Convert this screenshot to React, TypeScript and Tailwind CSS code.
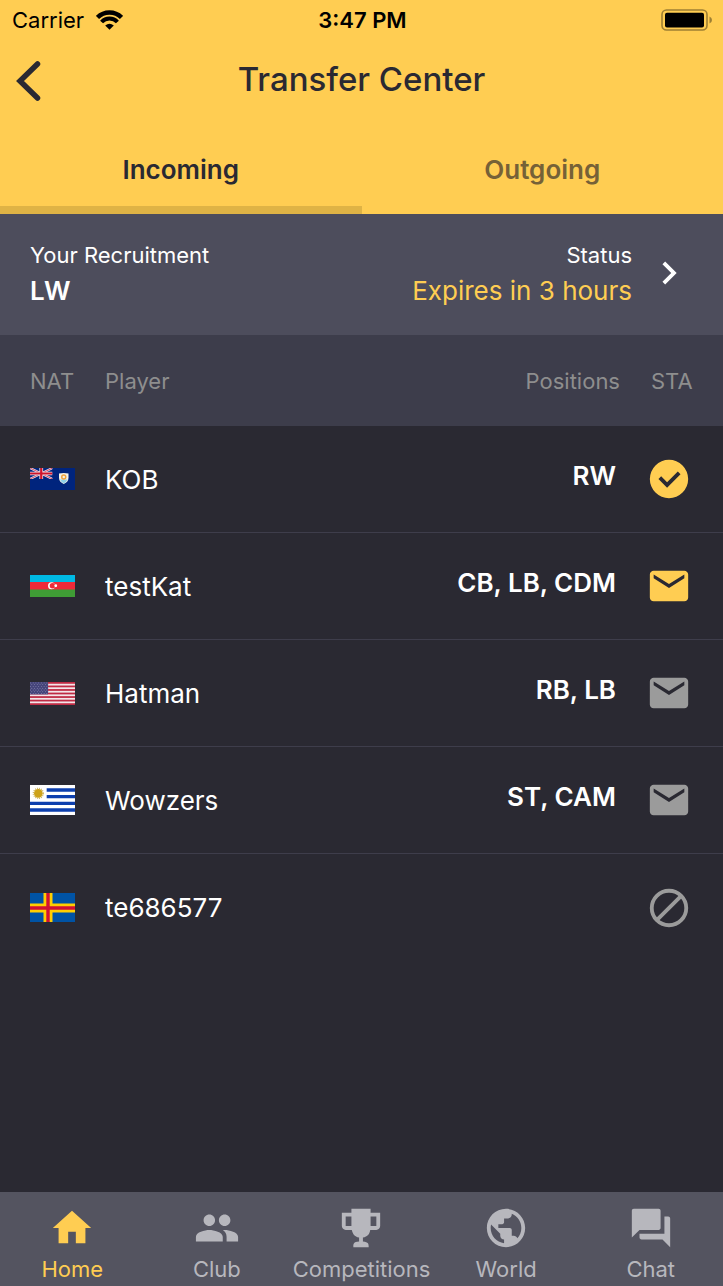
import type { ReactNode } from "react";
import { MdChevronRight, MdEmail, MdHome, MdPeople, MdPublic, MdQuestionAnswer } from "react-icons/md";

type Status = "accepted" | "offer" | "message" | "blocked";

function AnguillaFlag() {
  return (
    <svg viewBox="0 0 90 44" className="block h-[22px] w-[45px]" role="img" aria-label="Anguilla">
      <rect width="90" height="44" fill="#00247d" />
      <svg width="45" height="22" viewBox="0 0 60 30" preserveAspectRatio="none">
        <path d="M0 0L60 30M60 0L0 30" stroke="#e9e4ee" strokeWidth="6" />
        <path d="M0 0L60 30M60 0L0 30" stroke="#d43a55" strokeWidth="2.4" />
        <path d="M30 0V30M0 15H60" stroke="#e9e4ee" strokeWidth="10" />
        <path d="M30 0V30M0 15H60" stroke="#cf142b" strokeWidth="6" />
      </svg>
      <path d="M58 11q9.500-2 19 0v8q0 9-9.500 13q-9.500-4-9.500-13z" fill="#f6f3e6" />
      <path d="M60 23h15q-2 5-7.500 8q-5.500-3-7.500-8z" fill="#8ed0e6" />
      <circle cx="67.500" cy="18" r="4" fill="none" stroke="#f0a33c" strokeWidth="3" />
    </svg>
  );
}

function AzerbaijanFlag() {
  return (
    <svg viewBox="0 0 90 44" className="block h-[22px] w-[45px]" role="img" aria-label="Azerbaijan">
      <rect width="90" height="44" fill="#3f9c35" />
      <rect width="90" height="29" fill="#ed2939" />
      <rect width="90" height="14" fill="#00b9e4" />
      <circle cx="43" cy="21.500" r="7" fill="#fff" />
      <circle cx="45" cy="21.500" r="5.600" fill="#ed2939" />
      <circle cx="51.500" cy="21.500" r="2.800" fill="#fff" />
    </svg>
  );
}

function UnitedStatesFlag() {
  const stripes = [0, 2, 4, 6, 8, 10, 12];
  const dotRows = [1, 3, 5, 7, 9, 11, 13];
  const dotColumns = [1, 4, 7, 10, 13, 16, 19];
  return (
    <svg viewBox="0 0 49.4 26" preserveAspectRatio="none" className="block h-[23px] w-[45px]" role="img" aria-label="United States">
      <rect width="49.400" height="26" fill="#f3e6e9" />
      {stripes.map((i) => (
        <rect key={i} y={i * 2 * 1.0} width="49.400" height="2" fill="#bf2b44" />
      ))}
      <rect width="19.800" height="14" fill="#45447a" />
      {dotRows.map((y, row) =>
        dotColumns.map((x) => <circle key={`${x}-${y}`} cx={x + (row % 2) * 1.5 - 0.5} cy={y} r="0.5" fill="#a9a9c8" />)
      )}
    </svg>
  );
}

function UruguayFlag() {
  return (
    <svg viewBox="0 0 27 18" className="block h-[30px] w-[45px]" role="img" aria-label="Uruguay">
      <rect width="27" height="18" fill="#fff" />
      <path d="M10 3H27M10 7H27M0 11H27M0 15H27" stroke="#0d3fae" strokeWidth="2" />
      <circle cx="5" cy="5" r="3" fill="none" stroke="#cdb76a" strokeWidth="0.800" strokeDasharray="0.6 0.580" />
      <circle cx="5" cy="5" r="2.600" fill="#cda21a" />
    </svg>
  );
}

function AlandFlag() {
  return (
    <svg viewBox="0 0 45 29" className="block h-[29px] w-[45px]" role="img" aria-label="Åland">
      <rect width="45" height="29" fill="#0053a5" />
      <path d="M18 0V29M0 15H45" stroke="#ffce00" strokeWidth="9" />
      <path d="M18 0V29M0 15H45" stroke="#d21034" strokeWidth="3.400" />
    </svg>
  );
}

function StatusIcon({ status }: { status: Status }) {
  if (status === "accepted") {
    return (
      <svg viewBox="0 0 24 24" className="block size-[46px] fill-[#ffcd52]" role="img" aria-label="Accepted">
        <path d="M12,2A10,10 0 0,1 22,12A10,10 0 0,1 12,22A10,10 0 0,1 2,12A10,10 0 0,1 12,2M11,16.5L18,9.5L16.59,8.09L11,13.67L7.91,10.59L6.5,12L11,16.5Z" />
      </svg>
    );
  }
  if (status === "blocked") {
    return (
      <svg viewBox="0 0 24 24" className="block size-[46px] fill-none stroke-[#9b9b9b] stroke-2" role="img" aria-label="Blocked">
        <circle cx="12" cy="12" r="9" />
        <path d="M5.900 18.100L18.100 5.900" />
      </svg>
    );
  }
  return (
    <MdEmail
      className={status === "offer" ? "block size-[46px] text-[#ffcd52]" : "block size-[46px] text-[#9b9b9b]"}
      role="img"
      aria-label={status === "offer" ? "Offer" : "Message"}
    />
  );
}

function TrophyIcon() {
  return (
    <svg viewBox="0 0 24 24" className="size-[46px] fill-current" aria-hidden="true">
      <path d="M20.2,4H20H17V2H7V4H4.5H3.8H2V11C2,12 3,13 4,13H7.2C7.6,14.9 8.6,16.6 11,16.9V19C8,19.2 8,20.3 8,21.6V22H16V21.7C16,20.4 16,19.3 13,19V16.9C15.5,16.6 16.5,15 16.8,13H20C21,13 22,12 22,11V4H20.2M4,11V6H7V8V11C5.6,11 4.4,11 4,11M20,11C19.6,11 18.4,11 17,11V6H20V11Z" />
    </svg>
  );
}

const players: { name: string; flag: ReactNode; positions: string; status: Status }[] = [
  { name: "KOB", flag: <AnguillaFlag />, positions: "RW", status: "accepted" },
  { name: "testKat", flag: <AzerbaijanFlag />, positions: "CB, LB, CDM", status: "offer" },
  { name: "Hatman", flag: <UnitedStatesFlag />, positions: "RB, LB", status: "message" },
  { name: "Wowzers", flag: <UruguayFlag />, positions: "ST, CAM", status: "message" },
  { name: "te686577", flag: <AlandFlag />, positions: "", status: "blocked" },
];

const navItems: { label: string; icon: ReactNode }[] = [
  { label: "Home", icon: <MdHome className="size-[46px]" /> },
  { label: "Club", icon: <MdPeople className="size-[46px]" /> },
  { label: "Competitions", icon: <TrophyIcon /> },
  { label: "World", icon: <MdPublic className="size-[46px]" /> },
  { label: "Chat", icon: <MdQuestionAnswer className="size-[46px]" /> },
];

function StatusBar() {
  return (
    <div className="grid h-10 grid-cols-3 items-center pr-[10px] pl-3 text-[22px] text-black">
      <div className="flex items-center gap-3">
        <span>Carrier</span>
        <svg viewBox="0 0 27 20" className="h-5 w-[27px]" fill="none" stroke="currentColor" role="img" aria-label="Wi-Fi">
          <path d="M1.500 7.400A17 17 0 0 1 25.500 7.400" strokeWidth="4.400" />
          <path d="M5.600 12A10.600 10.600 0 0 1 21.400 12" strokeWidth="4" />
          <path d="M13.500 19.800L9.200 15.600Q13.500 12 17.800 15.600Z" fill="currentColor" stroke="none" />
        </svg>
      </div>
      <span className="text-center font-semibold">3:47 PM</span>
      <svg viewBox="0 0 52 22" className="h-[22px] w-[52px] justify-self-end" role="img" aria-label="Battery full">
        <rect x="1" y="1" width="45" height="20" rx="4.500" fill="none" stroke="#9e7f33" strokeWidth="1.600" />
        <rect x="4" y="3.700" width="39" height="14.800" rx="2" fill="#000" />
        <path d="M48.500 7.500Q51 8.500 51 11T48.500 14.500Z" fill="#9e7f33" />
      </svg>
    </div>
  );
}

export default function App() {
  return (
    <div className="flex min-h-screen flex-col bg-[#2a2932] font-['Inter',sans-serif] text-white">
      <header className="bg-[#ffcd52] text-[#2a2932]">
        <StatusBar />
        <div className="grid h-20 grid-cols-[44px_1fr_44px] items-center">
          <button type="button" aria-label="Back" className="flex h-full items-center pt-0.5 pl-4">
            <svg viewBox="0 0 26 42" className="h-[42px] w-[26px]" fill="none" stroke="currentColor" strokeWidth="5.500" strokeLinecap="round">
              <path d="M21.500 4L4 21L21.500 38" />
            </svg>
          </button>
          <h1 className="text-center text-[33px] font-medium">Transfer Center</h1>
        </div>
        <div role="tablist" className="grid grid-cols-2 text-[26px] font-semibold">
          <button type="button" role="tab" aria-selected="true" className="h-[94px] border-b-8 border-[#dfb345] pt-3">
            Incoming
          </button>
          <button type="button" role="tab" aria-selected="false" className="h-[94px] border-b-8 border-transparent pt-3 text-[#766137]">
            Outgoing
          </button>
        </div>
      </header>

      <main className="flex-1">
        <button type="button" className="flex w-full items-center bg-[#4d4d5c] pt-6 pr-[31px] pb-[27px] pl-[30px] text-left leading-[35px]">
          <span className="flex flex-1 flex-col">
            <span className="text-[22px]">Your Recruitment</span>
            <span className="text-[26px] font-semibold">LW</span>
          </span>
          <span className="flex flex-col text-right">
            <span className="text-[22px]">Status</span>
            <span className="text-[26px] text-[#ffcd52]">Expires in 3 hours</span>
          </span>
          <MdChevronRight className="ml-[14px] size-[46px]" />
        </button>

        <table className="w-full table-fixed border-separate border-spacing-0 text-left">
          <colgroup>
            <col className="w-[105px]" />
            <col />
            <col className="w-[240px]" />
            <col className="w-[103px]" />
          </colgroup>
          <thead className="bg-[#3d3d4b] text-[22px] text-[#8e8e8e]">
            <tr className="h-[91px]">
              <th scope="col" className="pt-0.5 pl-[30px] font-normal">NAT</th>
              <th scope="col" className="pt-0.5 font-normal">Player</th>
              <th scope="col" className="pt-0.5 text-right font-normal">Positions</th>
              <th scope="col" className="pt-0.5 pl-[31px] font-normal">STA</th>
            </tr>
          </thead>
          <tbody className="text-[26px] [&>tr:not(:last-child)>td]:border-b [&>tr>td]:border-[#3e3d4b]">
            {players.map((player) => (
              <tr key={player.name} className="h-[107px]">
                <td className="pl-[30px]">{player.flag}</td>
                <td>{player.name}</td>
                <td className="pr-1 pb-2 text-right font-semibold">{player.positions}</td>
                <td className="pl-[26px]">
                  <StatusIcon status={player.status} />
                </td>
              </tr>
            ))}
          </tbody>
        </table>
      </main>

      <nav className="grid grid-cols-5 bg-[#545460] pt-[13px]">
        {navItems.map((item, index) => (
          <a
            key={item.label}
            href="#"
            className={
              index === 0
                ? "flex flex-col items-center gap-0.5 text-[22px] leading-[33px] text-[#ffcd52]"
                : "flex flex-col items-center gap-0.5 text-[22px] leading-[33px] text-[#b7b7bd]"
            }
          >
            {item.icon}
            <span>{item.label}</span>
          </a>
        ))}
      </nav>
    </div>
  );
}
